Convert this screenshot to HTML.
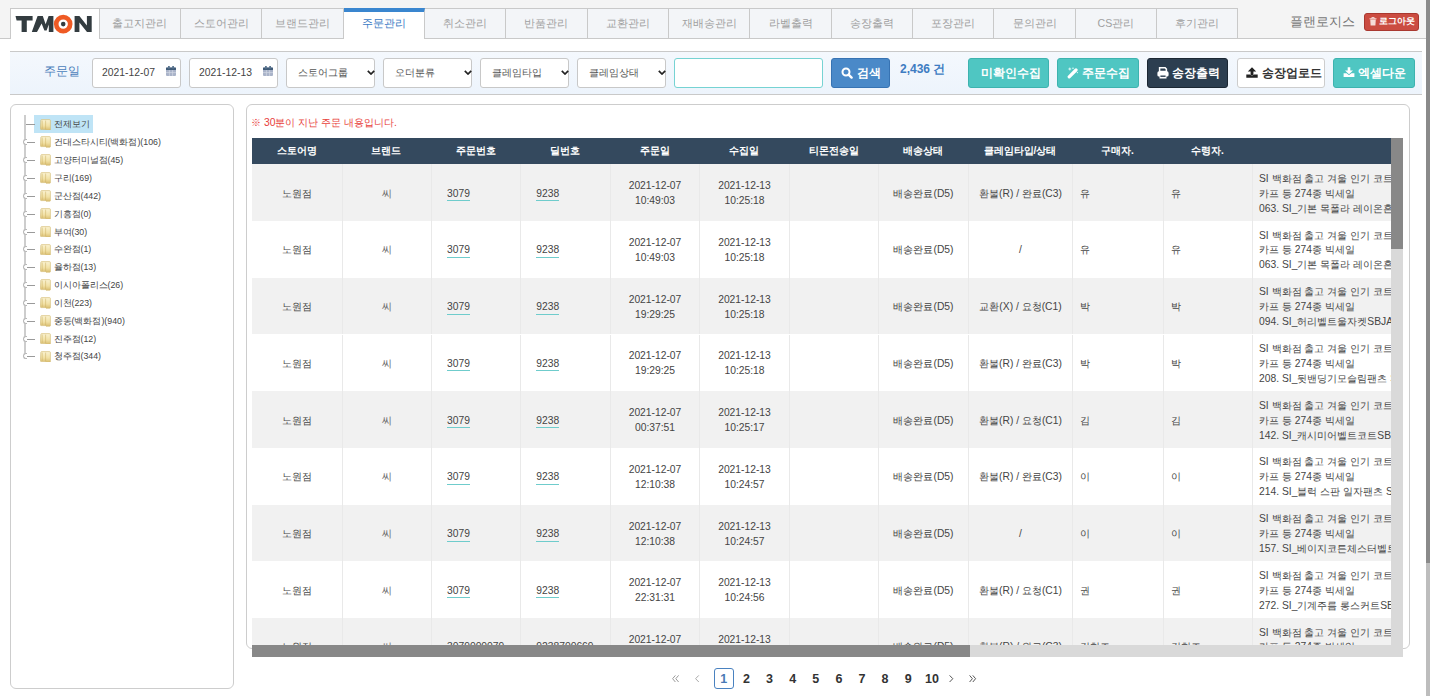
<!DOCTYPE html><html><head><meta charset="utf-8"><style>*{box-sizing:border-box;margin:0;padding:0}
html,body{width:1430px;height:696px;overflow:hidden;background:#fff;font-family:"Liberation Sans",sans-serif;color:#444;position:relative}
.ic{position:absolute}
#hdr{position:absolute;left:0;top:0;width:1426px;height:38px;background:#f4f4f4}
#hdrline{position:absolute;left:0;top:38px;width:1426px;height:1px;background:#c9c9c9}
#logo{position:absolute;left:10px;top:8px;width:89.5px;height:31px;background:#fff;border:1px solid #c9c9c9;border-bottom:none}
.tab{position:absolute;top:8px;height:31px;background:#f3f5f8;border:1px solid #c9c9c9;border-left:none;font-size:10.6px;color:#a0a0a0;text-align:center;line-height:28px}
.tab.act{background:#fff;color:#3a7ac4;border-top:4px solid #3a86cf;line-height:23px;border-bottom:none;height:31px}
#user{position:absolute;left:1289.5px;top:12.5px;font-size:13.3px;color:#777}
#logout{position:absolute;left:1364px;top:13px;width:55px;height:18px;background:#cb4c41;border:1px solid #a9382f;border-radius:3px;color:#fff;font-size:8.8px;font-weight:bold;line-height:14.5px;padding-left:14px;white-space:nowrap}
#sp{position:absolute;left:10px;top:51px;width:1412px;height:44px;background:linear-gradient(#f4f8fd,#edf4fc);border-top:1px solid #c9c9c9;border-bottom:1px solid #c9c9c9}
#lbl{position:absolute;left:44px;top:63px;font-size:12px;color:#4a7ebb}
.inp,.sel{position:absolute;top:58px;width:88.5px;height:30px;background:#fff;border:1px solid #c8c8c8;border-radius:3px;font-size:10.35px;color:#444;line-height:28px;padding-left:9px}
.sel{width:89px;padding-left:11px;color:#555;font-size:10.2px}
#txt{position:absolute;left:674px;top:58px;width:149px;height:30px;background:#fff;border:1px solid #76d3d3;border-radius:3px}
#sbtn{position:absolute;left:831px;top:58px;width:59px;height:30px;background:#4a89c8;border:1px solid #3773b3;border-radius:3px;color:#fff;font-size:12px;font-weight:bold;line-height:28px;padding-left:24.5px}
#cnt{position:absolute;left:900px;top:60.5px;font-size:12px;font-weight:bold;color:#3d7cc2}
.btn{position:absolute;top:58px;height:30px;border-radius:3px;font-size:12px;font-weight:bold;color:#fff;line-height:28px}
.bt{position:absolute;top:0;white-space:nowrap}
.teal{background:#4fc6c2;border:1px solid #3db3af}
.dark{background:#2c3e50;border:1px solid #1b2733}
.white{background:#fff;border:1px solid #cdcdcd;color:#333}
#lp{position:absolute;left:10px;top:104px;width:224px;height:584.5px;border:1px solid #cdcdcd;border-radius:6px}
#tline{position:absolute;left:24px;top:115px;width:1.5px;height:244px;background:#cdcdcd}
.hl{position:absolute;left:25.5px;width:9px;height:1px;background:#9a9a9a}
.knob{position:absolute;left:22.5px;width:4px;height:6px;border:1px solid #b8b8b8;border-right:none;border-radius:3px 0 0 3px;background:#fff}
.thl{position:absolute;left:34.4px;width:59px;height:17.4px;background:#bfe4f6}
.tt{position:absolute;left:53.5px;font-size:8.8px;line-height:12px;color:#444;white-space:nowrap}
#rp{position:absolute;left:246px;top:104px;width:1164px;height:545px;border:1px solid #cdcdcd;border-radius:6px}
#alert{position:absolute;left:251px;top:116px;font-size:10.4px;color:#e8403a;white-space:nowrap}
#tw{position:absolute;left:252px;top:137.6px;width:1151px;height:519.5px;overflow:hidden}
#thd{position:absolute;left:0;top:0;width:1151px;height:26.8px;background:#34495e}
.th{position:absolute;top:0;height:26.8px;line-height:26.5px;text-align:center;color:#fff;font-weight:bold;font-size:10.2px}
.tr{position:absolute;left:0;width:1248px;height:56.6px}
.odd{background:#f1f1f1}
.even{background:#fff}
.td{position:absolute;top:0;height:56.6px;border-left:1px solid #e9e9e9;font-size:10.3px;color:#444;display:flex;align-items:center;padding-top:3px}
.td:first-child{border-left:none}
.td .in{width:100%;line-height:14.9px;white-space:nowrap}
.c .in{text-align:center}
.l .in{padding-left:15px}
.l u{text-decoration:none;border-bottom:1px solid #6fcccc;padding-bottom:1.5px}
.l2 .in{padding-left:7px}
.l3 .in{padding-left:6px}
#vs{position:absolute;left:1139px;top:0;width:12px;height:519.5px;background:#d9d9d9}
#vth{position:absolute;left:0;top:0;width:12px;height:111px;background:#888}
#hs{position:absolute;left:0;top:507.5px;width:1139px;height:12px;background:#d9d9d9}
#hth{position:absolute;left:0;top:0;width:718px;height:12px;background:#888}
.pg{position:absolute;top:669px;width:24px;height:20px;text-align:center;font-size:12.5px;font-weight:bold;color:#333;line-height:20px}
.pg.act{color:#4a7ab5}
.pgact{position:absolute;left:713.7px;top:668.2px;width:20.4px;height:20.4px;border:1.6px solid #4a82c0;border-radius:3px}
#bsb{position:absolute;left:1425.5px;top:0;width:4.5px;height:696px;background:#bdbdbd}
#bsbt{position:absolute;left:0;top:0;width:4.5px;height:563px;background:#8a8a8a}
.lt .in{color:#666}
</style></head><body>
<div id="hdr"></div><div id="hdrline"></div>
<div id="logo"></div>
<svg class="ic" style="left:0px;top:0px" width="100" height="40" viewBox="0 0 100 40"><path d="M15.5 15.9 H32.6 V20.6 H26.8 V32 H21.6 V20.6 H16.6 Z" fill="#333c40"/><path d="M31.8 32 L37.6 15.9 H42.8 L45.6 24.2 L48.6 15.9 H53.4 V32 H48.8 V24.6 L46.6 30.4 H44.4 L41.6 23.6 L37 32 Z" fill="#333c40"/><circle cx="63.2" cy="24.1" r="7" fill="none" stroke="#ef5a24" stroke-width="4.6"/><circle cx="63.2" cy="24.1" r="2.3" fill="#333c40"/><path d="M74.6 15.9 H79.4 L86.9 25.6 V15.9 H91.7 V32 H87 L79.4 22.4 V32 H74.6 Z" fill="#333c40"/></svg>
<div class="tab" style="left:99.50px;width:81.36px">출고지관리</div>
<div class="tab" style="left:180.86px;width:81.36px">스토어관리</div>
<div class="tab" style="left:262.21px;width:81.36px">브랜드관리</div>
<div class="tab act" style="left:343.57px;width:81.36px">주문관리</div>
<div class="tab" style="left:424.93px;width:81.36px">취소관리</div>
<div class="tab" style="left:506.28px;width:81.36px">반품관리</div>
<div class="tab" style="left:587.64px;width:81.36px">교환관리</div>
<div class="tab" style="left:669.00px;width:81.36px">재배송관리</div>
<div class="tab" style="left:750.36px;width:81.36px">라벨출력</div>
<div class="tab" style="left:831.71px;width:81.36px">송장출력</div>
<div class="tab" style="left:913.07px;width:81.36px">포장관리</div>
<div class="tab" style="left:994.43px;width:81.36px">문의관리</div>
<div class="tab" style="left:1075.78px;width:81.36px">CS관리</div>
<div class="tab" style="left:1157.14px;width:81.36px">후기관리</div>
<div id="user">플랜로지스</div>
<div id="logout">로그아웃</div>
<svg class="ic" style="left:1368.5px;top:17px" width="8" height="9" viewBox="0 0 8 9"><path d="M0.5 1.8 H7.5 M2.8 1.8 V0.6 H5.2 V1.8" stroke="#f6dcd8" stroke-width="1" fill="none"/><path d="M1.2 2.6 H6.8 L6.4 8.6 H1.6 Z" fill="#f6dcd8"/></svg>
<div id="sp"></div>
<div id="lbl">주문일</div>
<div class="inp" style="left:92px">2021-12-07</div>
<svg class="ic" style="left:166.2px;top:65.5px" width="10" height="10" viewBox="0 0 10 10"><rect x="0" y="1.5" width="10" height="8.5" rx="1" fill="#a9b3c9"/><rect x="0" y="1.5" width="10" height="2.6" rx="0.6" fill="#3f5b78"/><rect x="2" y="0" width="1.8" height="2.6" fill="#5a7690"/><rect x="6.2" y="0" width="1.8" height="2.6" fill="#5a7690"/><path d="M0 6.6 H10 M3.4 4.1 V10 M6.6 4.1 V10" stroke="#d3d9e4" stroke-width="0.7"/></svg>
<div class="inp" style="left:189px">2021-12-13</div>
<svg class="ic" style="left:263.2px;top:65.5px" width="10" height="10" viewBox="0 0 10 10"><rect x="0" y="1.5" width="10" height="8.5" rx="1" fill="#a9b3c9"/><rect x="0" y="1.5" width="10" height="2.6" rx="0.6" fill="#3f5b78"/><rect x="2" y="0" width="1.8" height="2.6" fill="#5a7690"/><rect x="6.2" y="0" width="1.8" height="2.6" fill="#5a7690"/><path d="M0 6.6 H10 M3.4 4.1 V10 M6.6 4.1 V10" stroke="#d3d9e4" stroke-width="0.7"/></svg>
<div class="sel" style="left:286px">스토어그룹</div>
<svg class="ic" style="left:367px;top:70px" width="8" height="5" viewBox="0 0 8 5"><path d="M0.8 0.8 L4 4 L7.2 0.8" stroke="#222" stroke-width="1.7" fill="none"/></svg>
<div class="sel" style="left:383px">오더분류</div>
<svg class="ic" style="left:464px;top:70px" width="8" height="5" viewBox="0 0 8 5"><path d="M0.8 0.8 L4 4 L7.2 0.8" stroke="#222" stroke-width="1.7" fill="none"/></svg>
<div class="sel" style="left:480px">클레임타입</div>
<svg class="ic" style="left:561px;top:70px" width="8" height="5" viewBox="0 0 8 5"><path d="M0.8 0.8 L4 4 L7.2 0.8" stroke="#222" stroke-width="1.7" fill="none"/></svg>
<div class="sel" style="left:577px">클레임상태</div>
<svg class="ic" style="left:658px;top:70px" width="8" height="5" viewBox="0 0 8 5"><path d="M0.8 0.8 L4 4 L7.2 0.8" stroke="#222" stroke-width="1.7" fill="none"/></svg>
<div id="txt"></div>
<div id="sbtn">검색</div>
<svg class="ic" style="left:841px;top:67px" width="12" height="12" viewBox="0 0 12 12"><circle cx="5" cy="5" r="3.5" fill="none" stroke="#fff" stroke-width="2"/><path d="M7.6 7.6 L10.6 10.6" stroke="#fff" stroke-width="2.4" stroke-linecap="round"/></svg>
<div id="cnt">2,436 건</div>
<div class="btn teal" style="left:967.5px;width:81.5px"><span class="bt" style="left:12.5px">미확인수집</span></div>
<div class="btn teal" style="left:1057px;width:81.5px"><span class="bt" style="left:23.5px">주문수집</span></div>
<svg class="ic" style="left:1067px;top:66px" width="12" height="13" viewBox="0 0 12 13"><path d="M2.2 10.8 L9 4" stroke="#fff" stroke-width="3.2" stroke-linecap="round"/><path d="M2.8 1.6 V4.4 M1.4 3 H4.2" stroke="#dff8f7" stroke-width="1"/><circle cx="6" cy="2.2" r="0.8" fill="#dff8f7"/><circle cx="10.4" cy="6.6" r="0.7" fill="#dff8f7"/></svg>
<div class="btn dark" style="left:1146.5px;width:81.5px"><span class="bt" style="left:24px">송장출력</span></div>
<svg class="ic" style="left:1156.5px;top:66.5px" width="12" height="12" viewBox="0 0 12 12"><path d="M2.6 0.8 H8.1 L9.4 2.1 V4.6 H2.6 Z" fill="none" stroke="#fff" stroke-width="1.5"/><rect x="0.4" y="4.3" width="11.2" height="5.3" rx="1.6" fill="#fff"/><rect x="2.5" y="8" width="7" height="3.5" fill="#fff"/><rect x="3.4" y="8.5" width="5.2" height="1.4" fill="#2c3e50"/></svg>
<div class="btn white" style="left:1236.5px;width:88.5px"><span class="bt" style="left:24px;font-size:11.6px">송장업로드</span></div>
<svg class="ic" style="left:1246px;top:67px" width="12" height="11" viewBox="0 0 12 11"><path d="M6 0.2 L10.2 4.5 H7.4 V8.2 H4.6 V4.5 H1.8 Z" fill="#222"/><path d="M0.3 7.6 H4 Q6 9.4 8 7.6 H11.7 V10.8 H0.3 Z" fill="#222"/></svg>
<div class="btn teal" style="left:1333px;width:82px"><span class="bt" style="left:23.5px">엑셀다운</span></div>
<svg class="ic" style="left:1342.5px;top:67px" width="12" height="10.5" viewBox="0 0 12 10.5"><path d="M4.7 0.2 H7.3 V3.4 H10 L6 7.2 L2 3.4 H4.7 Z" fill="#fff"/><path d="M0.6 6.2 H3.6 L6 8.3 L8.4 6.2 H11.4 V10 H0.6 Z" fill="#fff"/></svg>
<div id="lp"></div><div id="tline"></div>
<svg width="0" height="0" style="position:absolute"><defs><linearGradient id="fg" x1="0" x2="1"><stop offset="0" stop-color="#d8b868"/><stop offset="0.5" stop-color="#fbf0c4"/><stop offset="1" stop-color="#e8cf88"/></linearGradient><linearGradient id="fg2" x1="0" x2="0" y1="0" y2="1"><stop offset="0" stop-color="#faf3d2"/><stop offset="0.6" stop-color="#f1e0a4"/><stop offset="1" stop-color="#d9bd70"/></linearGradient></defs></svg>
<div class="thl" style="top:115.30px"></div>
<div class="hl" style="top:124.40px"></div>
<svg class="ic" style="left:39.5px;top:118.6px" width="11" height="11.6" viewBox="0 0 11 11.6"><path d="M1.6 0.6 H9.4 Q10.4 0.6 10.4 1.6 V10.6 Q10.4 11.2 9.8 11.2 H6 L5.4 10.6 H1.2 Q0.4 10.6 0.4 9.8 L0.8 1.4 Q1 0.6 1.6 0.6 Z" fill="url(#fg2)" stroke="#d2b86e" stroke-width="0.6"/><path d="M2.2 1.6 V9.8 M5.6 1.6 V10.4" stroke="#c9ab5a" stroke-width="0.8" opacity="0.6"/></svg>
<div class="tt" style="top:118.40px">전제보기</div>
<div class="hl" style="top:142.25px"></div>
<div class="knob" style="top:139.25px"></div>
<svg class="ic" style="left:39.5px;top:136.45px" width="11" height="11.6" viewBox="0 0 11 11.6"><path d="M1.6 0.6 H9.4 Q10.4 0.6 10.4 1.6 V10.6 Q10.4 11.2 9.8 11.2 H6 L5.4 10.6 H1.2 Q0.4 10.6 0.4 9.8 L0.8 1.4 Q1 0.6 1.6 0.6 Z" fill="url(#fg2)" stroke="#d2b86e" stroke-width="0.6"/><path d="M2.2 1.6 V9.8 M5.6 1.6 V10.4" stroke="#c9ab5a" stroke-width="0.8" opacity="0.6"/></svg>
<div class="tt" style="top:136.25px">건대스타시티(백화점)(106)</div>
<div class="hl" style="top:160.10px"></div>
<div class="knob" style="top:157.10px"></div>
<svg class="ic" style="left:39.5px;top:154.3px" width="11" height="11.6" viewBox="0 0 11 11.6"><path d="M1.6 0.6 H9.4 Q10.4 0.6 10.4 1.6 V10.6 Q10.4 11.2 9.8 11.2 H6 L5.4 10.6 H1.2 Q0.4 10.6 0.4 9.8 L0.8 1.4 Q1 0.6 1.6 0.6 Z" fill="url(#fg2)" stroke="#d2b86e" stroke-width="0.6"/><path d="M2.2 1.6 V9.8 M5.6 1.6 V10.4" stroke="#c9ab5a" stroke-width="0.8" opacity="0.6"/></svg>
<div class="tt" style="top:154.10px">고양터미널점(45)</div>
<div class="hl" style="top:177.95px"></div>
<div class="knob" style="top:174.95px"></div>
<svg class="ic" style="left:39.5px;top:172.15px" width="11" height="11.6" viewBox="0 0 11 11.6"><path d="M1.6 0.6 H9.4 Q10.4 0.6 10.4 1.6 V10.6 Q10.4 11.2 9.8 11.2 H6 L5.4 10.6 H1.2 Q0.4 10.6 0.4 9.8 L0.8 1.4 Q1 0.6 1.6 0.6 Z" fill="url(#fg2)" stroke="#d2b86e" stroke-width="0.6"/><path d="M2.2 1.6 V9.8 M5.6 1.6 V10.4" stroke="#c9ab5a" stroke-width="0.8" opacity="0.6"/></svg>
<div class="tt" style="top:171.95px">구리(169)</div>
<div class="hl" style="top:195.80px"></div>
<div class="knob" style="top:192.80px"></div>
<svg class="ic" style="left:39.5px;top:190.0px" width="11" height="11.6" viewBox="0 0 11 11.6"><path d="M1.6 0.6 H9.4 Q10.4 0.6 10.4 1.6 V10.6 Q10.4 11.2 9.8 11.2 H6 L5.4 10.6 H1.2 Q0.4 10.6 0.4 9.8 L0.8 1.4 Q1 0.6 1.6 0.6 Z" fill="url(#fg2)" stroke="#d2b86e" stroke-width="0.6"/><path d="M2.2 1.6 V9.8 M5.6 1.6 V10.4" stroke="#c9ab5a" stroke-width="0.8" opacity="0.6"/></svg>
<div class="tt" style="top:189.80px">군산점(442)</div>
<div class="hl" style="top:213.65px"></div>
<div class="knob" style="top:210.65px"></div>
<svg class="ic" style="left:39.5px;top:207.85px" width="11" height="11.6" viewBox="0 0 11 11.6"><path d="M1.6 0.6 H9.4 Q10.4 0.6 10.4 1.6 V10.6 Q10.4 11.2 9.8 11.2 H6 L5.4 10.6 H1.2 Q0.4 10.6 0.4 9.8 L0.8 1.4 Q1 0.6 1.6 0.6 Z" fill="url(#fg2)" stroke="#d2b86e" stroke-width="0.6"/><path d="M2.2 1.6 V9.8 M5.6 1.6 V10.4" stroke="#c9ab5a" stroke-width="0.8" opacity="0.6"/></svg>
<div class="tt" style="top:207.65px">기흥점(0)</div>
<div class="hl" style="top:231.50px"></div>
<div class="knob" style="top:228.50px"></div>
<svg class="ic" style="left:39.5px;top:225.7px" width="11" height="11.6" viewBox="0 0 11 11.6"><path d="M1.6 0.6 H9.4 Q10.4 0.6 10.4 1.6 V10.6 Q10.4 11.2 9.8 11.2 H6 L5.4 10.6 H1.2 Q0.4 10.6 0.4 9.8 L0.8 1.4 Q1 0.6 1.6 0.6 Z" fill="url(#fg2)" stroke="#d2b86e" stroke-width="0.6"/><path d="M2.2 1.6 V9.8 M5.6 1.6 V10.4" stroke="#c9ab5a" stroke-width="0.8" opacity="0.6"/></svg>
<div class="tt" style="top:225.50px">부여(30)</div>
<div class="hl" style="top:249.35px"></div>
<div class="knob" style="top:246.35px"></div>
<svg class="ic" style="left:39.5px;top:243.55px" width="11" height="11.6" viewBox="0 0 11 11.6"><path d="M1.6 0.6 H9.4 Q10.4 0.6 10.4 1.6 V10.6 Q10.4 11.2 9.8 11.2 H6 L5.4 10.6 H1.2 Q0.4 10.6 0.4 9.8 L0.8 1.4 Q1 0.6 1.6 0.6 Z" fill="url(#fg2)" stroke="#d2b86e" stroke-width="0.6"/><path d="M2.2 1.6 V9.8 M5.6 1.6 V10.4" stroke="#c9ab5a" stroke-width="0.8" opacity="0.6"/></svg>
<div class="tt" style="top:243.35px">수완점(1)</div>
<div class="hl" style="top:267.20px"></div>
<div class="knob" style="top:264.20px"></div>
<svg class="ic" style="left:39.5px;top:261.4px" width="11" height="11.6" viewBox="0 0 11 11.6"><path d="M1.6 0.6 H9.4 Q10.4 0.6 10.4 1.6 V10.6 Q10.4 11.2 9.8 11.2 H6 L5.4 10.6 H1.2 Q0.4 10.6 0.4 9.8 L0.8 1.4 Q1 0.6 1.6 0.6 Z" fill="url(#fg2)" stroke="#d2b86e" stroke-width="0.6"/><path d="M2.2 1.6 V9.8 M5.6 1.6 V10.4" stroke="#c9ab5a" stroke-width="0.8" opacity="0.6"/></svg>
<div class="tt" style="top:261.20px">율하점(13)</div>
<div class="hl" style="top:285.05px"></div>
<div class="knob" style="top:282.05px"></div>
<svg class="ic" style="left:39.5px;top:279.25px" width="11" height="11.6" viewBox="0 0 11 11.6"><path d="M1.6 0.6 H9.4 Q10.4 0.6 10.4 1.6 V10.6 Q10.4 11.2 9.8 11.2 H6 L5.4 10.6 H1.2 Q0.4 10.6 0.4 9.8 L0.8 1.4 Q1 0.6 1.6 0.6 Z" fill="url(#fg2)" stroke="#d2b86e" stroke-width="0.6"/><path d="M2.2 1.6 V9.8 M5.6 1.6 V10.4" stroke="#c9ab5a" stroke-width="0.8" opacity="0.6"/></svg>
<div class="tt" style="top:279.05px">이시아폴리스(26)</div>
<div class="hl" style="top:302.90px"></div>
<div class="knob" style="top:299.90px"></div>
<svg class="ic" style="left:39.5px;top:297.1px" width="11" height="11.6" viewBox="0 0 11 11.6"><path d="M1.6 0.6 H9.4 Q10.4 0.6 10.4 1.6 V10.6 Q10.4 11.2 9.8 11.2 H6 L5.4 10.6 H1.2 Q0.4 10.6 0.4 9.8 L0.8 1.4 Q1 0.6 1.6 0.6 Z" fill="url(#fg2)" stroke="#d2b86e" stroke-width="0.6"/><path d="M2.2 1.6 V9.8 M5.6 1.6 V10.4" stroke="#c9ab5a" stroke-width="0.8" opacity="0.6"/></svg>
<div class="tt" style="top:296.90px">이천(223)</div>
<div class="hl" style="top:320.75px"></div>
<div class="knob" style="top:317.75px"></div>
<svg class="ic" style="left:39.5px;top:314.95px" width="11" height="11.6" viewBox="0 0 11 11.6"><path d="M1.6 0.6 H9.4 Q10.4 0.6 10.4 1.6 V10.6 Q10.4 11.2 9.8 11.2 H6 L5.4 10.6 H1.2 Q0.4 10.6 0.4 9.8 L0.8 1.4 Q1 0.6 1.6 0.6 Z" fill="url(#fg2)" stroke="#d2b86e" stroke-width="0.6"/><path d="M2.2 1.6 V9.8 M5.6 1.6 V10.4" stroke="#c9ab5a" stroke-width="0.8" opacity="0.6"/></svg>
<div class="tt" style="top:314.75px">중동(백화점)(940)</div>
<div class="hl" style="top:338.60px"></div>
<div class="knob" style="top:335.60px"></div>
<svg class="ic" style="left:39.5px;top:332.8px" width="11" height="11.6" viewBox="0 0 11 11.6"><path d="M1.6 0.6 H9.4 Q10.4 0.6 10.4 1.6 V10.6 Q10.4 11.2 9.8 11.2 H6 L5.4 10.6 H1.2 Q0.4 10.6 0.4 9.8 L0.8 1.4 Q1 0.6 1.6 0.6 Z" fill="url(#fg2)" stroke="#d2b86e" stroke-width="0.6"/><path d="M2.2 1.6 V9.8 M5.6 1.6 V10.4" stroke="#c9ab5a" stroke-width="0.8" opacity="0.6"/></svg>
<div class="tt" style="top:332.60px">진주점(12)</div>
<div class="hl" style="top:356.45px"></div>
<div class="knob" style="top:353.45px"></div>
<svg class="ic" style="left:39.5px;top:350.65px" width="11" height="11.6" viewBox="0 0 11 11.6"><path d="M1.6 0.6 H9.4 Q10.4 0.6 10.4 1.6 V10.6 Q10.4 11.2 9.8 11.2 H6 L5.4 10.6 H1.2 Q0.4 10.6 0.4 9.8 L0.8 1.4 Q1 0.6 1.6 0.6 Z" fill="url(#fg2)" stroke="#d2b86e" stroke-width="0.6"/><path d="M2.2 1.6 V9.8 M5.6 1.6 V10.4" stroke="#c9ab5a" stroke-width="0.8" opacity="0.6"/></svg>
<div class="tt" style="top:350.45px">청주점(344)</div>
<div id="rp"></div>
<div id="alert">※ 30분이 지난 주문 내용입니다.</div>
<div id="tw"><div id="thd">
<div class="th" style="left:0.0px;width:89.5px">스토어명</div>
<div class="th" style="left:89.5px;width:89.5px">브랜드</div>
<div class="th" style="left:179.0px;width:89.3px">주문번호</div>
<div class="th" style="left:268.3px;width:89.7px">딜번호</div>
<div class="th" style="left:358.0px;width:89.0px">주문일</div>
<div class="th" style="left:447.0px;width:90.0px">수집일</div>
<div class="th" style="left:537.0px;width:89.0px">티몬전송일</div>
<div class="th" style="left:626.0px;width:90.0px">배송상태</div>
<div class="th" style="left:716.0px;width:104.0px">클레임타입/상태</div>
<div class="th" style="left:820.0px;width:91.0px">구매자.</div>
<div class="th" style="left:911.0px;width:89.0px">수령자.</div>
<div class="th" style="left:1000.0px;width:248.0px"></div>
</div>
<div class="tr odd" style="top:26.80px">
<div class="td c" style="left:0.0px;width:89.5px"><div class="in">노원점</div></div>
<div class="td c lt" style="left:89.5px;width:89.5px"><div class="in">씨</div></div>
<div class="td l" style="left:179.0px;width:89.3px"><div class="in"><u>3079</u></div></div>
<div class="td l" style="left:268.3px;width:89.7px"><div class="in"><u>9238</u></div></div>
<div class="td c" style="left:358.0px;width:89.0px"><div class="in">2021-12-07<br>10:49:03</div></div>
<div class="td c" style="left:447.0px;width:90.0px"><div class="in">2021-12-13<br>10:25:18</div></div>
<div class="td c" style="left:537.0px;width:89.0px"><div class="in"></div></div>
<div class="td c" style="left:626.0px;width:90.0px"><div class="in">배송완료(D5)</div></div>
<div class="td c" style="left:716.0px;width:104.0px"><div class="in">환불(R) / 완료(C3)</div></div>
<div class="td l2" style="left:820.0px;width:91.0px"><div class="in">유</div></div>
<div class="td l2" style="left:911.0px;width:89.0px"><div class="in">유</div></div>
<div class="td l3" style="left:1000.0px;width:248.0px"><div class="in">SI 백화점 출고 겨울 인기 코트<br>카프 등 274종 빅세일<br>063. SI_기본 목폴라 레이온혼방</div></div>
</div>
<div class="tr even" style="top:83.52px">
<div class="td c" style="left:0.0px;width:89.5px"><div class="in">노원점</div></div>
<div class="td c lt" style="left:89.5px;width:89.5px"><div class="in">씨</div></div>
<div class="td l" style="left:179.0px;width:89.3px"><div class="in"><u>3079</u></div></div>
<div class="td l" style="left:268.3px;width:89.7px"><div class="in"><u>9238</u></div></div>
<div class="td c" style="left:358.0px;width:89.0px"><div class="in">2021-12-07<br>10:49:03</div></div>
<div class="td c" style="left:447.0px;width:90.0px"><div class="in">2021-12-13<br>10:25:18</div></div>
<div class="td c" style="left:537.0px;width:89.0px"><div class="in"></div></div>
<div class="td c" style="left:626.0px;width:90.0px"><div class="in">배송완료(D5)</div></div>
<div class="td c" style="left:716.0px;width:104.0px"><div class="in">/</div></div>
<div class="td l2" style="left:820.0px;width:91.0px"><div class="in">유</div></div>
<div class="td l2" style="left:911.0px;width:89.0px"><div class="in">유</div></div>
<div class="td l3" style="left:1000.0px;width:248.0px"><div class="in">SI 백화점 출고 겨울 인기 코트<br>카프 등 274종 빅세일<br>063. SI_기본 목폴라 레이온혼방</div></div>
</div>
<div class="tr odd" style="top:140.24px">
<div class="td c" style="left:0.0px;width:89.5px"><div class="in">노원점</div></div>
<div class="td c lt" style="left:89.5px;width:89.5px"><div class="in">씨</div></div>
<div class="td l" style="left:179.0px;width:89.3px"><div class="in"><u>3079</u></div></div>
<div class="td l" style="left:268.3px;width:89.7px"><div class="in"><u>9238</u></div></div>
<div class="td c" style="left:358.0px;width:89.0px"><div class="in">2021-12-07<br>19:29:25</div></div>
<div class="td c" style="left:447.0px;width:90.0px"><div class="in">2021-12-13<br>10:25:18</div></div>
<div class="td c" style="left:537.0px;width:89.0px"><div class="in"></div></div>
<div class="td c" style="left:626.0px;width:90.0px"><div class="in">배송완료(D5)</div></div>
<div class="td c" style="left:716.0px;width:104.0px"><div class="in">교환(X) / 요청(C1)</div></div>
<div class="td l2" style="left:820.0px;width:91.0px"><div class="in">박</div></div>
<div class="td l2" style="left:911.0px;width:89.0px"><div class="in">박</div></div>
<div class="td l3" style="left:1000.0px;width:248.0px"><div class="in">SI 백화점 출고 겨울 인기 코트<br>카프 등 274종 빅세일<br>094. SI_허리벨트울자켓SBJA</div></div>
</div>
<div class="tr even" style="top:196.96px">
<div class="td c" style="left:0.0px;width:89.5px"><div class="in">노원점</div></div>
<div class="td c lt" style="left:89.5px;width:89.5px"><div class="in">씨</div></div>
<div class="td l" style="left:179.0px;width:89.3px"><div class="in"><u>3079</u></div></div>
<div class="td l" style="left:268.3px;width:89.7px"><div class="in"><u>9238</u></div></div>
<div class="td c" style="left:358.0px;width:89.0px"><div class="in">2021-12-07<br>19:29:25</div></div>
<div class="td c" style="left:447.0px;width:90.0px"><div class="in">2021-12-13<br>10:25:18</div></div>
<div class="td c" style="left:537.0px;width:89.0px"><div class="in"></div></div>
<div class="td c" style="left:626.0px;width:90.0px"><div class="in">배송완료(D5)</div></div>
<div class="td c" style="left:716.0px;width:104.0px"><div class="in">환불(R) / 완료(C3)</div></div>
<div class="td l2" style="left:820.0px;width:91.0px"><div class="in">박</div></div>
<div class="td l2" style="left:911.0px;width:89.0px"><div class="in">박</div></div>
<div class="td l3" style="left:1000.0px;width:248.0px"><div class="in">SI 백화점 출고 겨울 인기 코트<br>카프 등 274종 빅세일<br>208. SI_뒷밴딩기모슬림팬츠 S</div></div>
</div>
<div class="tr odd" style="top:253.68px">
<div class="td c" style="left:0.0px;width:89.5px"><div class="in">노원점</div></div>
<div class="td c lt" style="left:89.5px;width:89.5px"><div class="in">씨</div></div>
<div class="td l" style="left:179.0px;width:89.3px"><div class="in"><u>3079</u></div></div>
<div class="td l" style="left:268.3px;width:89.7px"><div class="in"><u>9238</u></div></div>
<div class="td c" style="left:358.0px;width:89.0px"><div class="in">2021-12-07<br>00:37:51</div></div>
<div class="td c" style="left:447.0px;width:90.0px"><div class="in">2021-12-13<br>10:25:17</div></div>
<div class="td c" style="left:537.0px;width:89.0px"><div class="in"></div></div>
<div class="td c" style="left:626.0px;width:90.0px"><div class="in">배송완료(D5)</div></div>
<div class="td c" style="left:716.0px;width:104.0px"><div class="in">환불(R) / 요청(C1)</div></div>
<div class="td l2" style="left:820.0px;width:91.0px"><div class="in">김</div></div>
<div class="td l2" style="left:911.0px;width:89.0px"><div class="in">김</div></div>
<div class="td l3" style="left:1000.0px;width:248.0px"><div class="in">SI 백화점 출고 겨울 인기 코트<br>카프 등 274종 빅세일<br>142. SI_캐시미어벨트코트SBC</div></div>
</div>
<div class="tr even" style="top:310.40px">
<div class="td c" style="left:0.0px;width:89.5px"><div class="in">노원점</div></div>
<div class="td c lt" style="left:89.5px;width:89.5px"><div class="in">씨</div></div>
<div class="td l" style="left:179.0px;width:89.3px"><div class="in"><u>3079</u></div></div>
<div class="td l" style="left:268.3px;width:89.7px"><div class="in"><u>9238</u></div></div>
<div class="td c" style="left:358.0px;width:89.0px"><div class="in">2021-12-07<br>12:10:38</div></div>
<div class="td c" style="left:447.0px;width:90.0px"><div class="in">2021-12-13<br>10:24:57</div></div>
<div class="td c" style="left:537.0px;width:89.0px"><div class="in"></div></div>
<div class="td c" style="left:626.0px;width:90.0px"><div class="in">배송완료(D5)</div></div>
<div class="td c" style="left:716.0px;width:104.0px"><div class="in">환불(R) / 완료(C3)</div></div>
<div class="td l2" style="left:820.0px;width:91.0px"><div class="in">이</div></div>
<div class="td l2" style="left:911.0px;width:89.0px"><div class="in">이</div></div>
<div class="td l3" style="left:1000.0px;width:248.0px"><div class="in">SI 백화점 출고 겨울 인기 코트<br>카프 등 274종 빅세일<br>214. SI_블럭 스판 일자팬츠 S</div></div>
</div>
<div class="tr odd" style="top:367.12px">
<div class="td c" style="left:0.0px;width:89.5px"><div class="in">노원점</div></div>
<div class="td c lt" style="left:89.5px;width:89.5px"><div class="in">씨</div></div>
<div class="td l" style="left:179.0px;width:89.3px"><div class="in"><u>3079</u></div></div>
<div class="td l" style="left:268.3px;width:89.7px"><div class="in"><u>9238</u></div></div>
<div class="td c" style="left:358.0px;width:89.0px"><div class="in">2021-12-07<br>12:10:38</div></div>
<div class="td c" style="left:447.0px;width:90.0px"><div class="in">2021-12-13<br>10:24:57</div></div>
<div class="td c" style="left:537.0px;width:89.0px"><div class="in"></div></div>
<div class="td c" style="left:626.0px;width:90.0px"><div class="in">배송완료(D5)</div></div>
<div class="td c" style="left:716.0px;width:104.0px"><div class="in">/</div></div>
<div class="td l2" style="left:820.0px;width:91.0px"><div class="in">이</div></div>
<div class="td l2" style="left:911.0px;width:89.0px"><div class="in">이</div></div>
<div class="td l3" style="left:1000.0px;width:248.0px"><div class="in">SI 백화점 출고 겨울 인기 코트<br>카프 등 274종 빅세일<br>157. SI_베이지코튼체스터벨트</div></div>
</div>
<div class="tr even" style="top:423.84px">
<div class="td c" style="left:0.0px;width:89.5px"><div class="in">노원점</div></div>
<div class="td c lt" style="left:89.5px;width:89.5px"><div class="in">씨</div></div>
<div class="td l" style="left:179.0px;width:89.3px"><div class="in"><u>3079</u></div></div>
<div class="td l" style="left:268.3px;width:89.7px"><div class="in"><u>9238</u></div></div>
<div class="td c" style="left:358.0px;width:89.0px"><div class="in">2021-12-07<br>22:31:31</div></div>
<div class="td c" style="left:447.0px;width:90.0px"><div class="in">2021-12-13<br>10:24:56</div></div>
<div class="td c" style="left:537.0px;width:89.0px"><div class="in"></div></div>
<div class="td c" style="left:626.0px;width:90.0px"><div class="in">배송완료(D5)</div></div>
<div class="td c" style="left:716.0px;width:104.0px"><div class="in">환불(R) / 요청(C1)</div></div>
<div class="td l2" style="left:820.0px;width:91.0px"><div class="in">권</div></div>
<div class="td l2" style="left:911.0px;width:89.0px"><div class="in">권</div></div>
<div class="td l3" style="left:1000.0px;width:248.0px"><div class="in">SI 백화점 출고 겨울 인기 코트<br>카프 등 274종 빅세일<br>272. SI_기계주름 롱스커트SBS</div></div>
</div>
<div class="tr odd" style="top:480.56px">
<div class="td c" style="left:0.0px;width:89.5px"><div class="in">노원점</div></div>
<div class="td c lt" style="left:89.5px;width:89.5px"><div class="in">씨</div></div>
<div class="td l" style="left:179.0px;width:89.3px"><div class="in"><u>3079000079</u></div></div>
<div class="td l" style="left:268.3px;width:89.7px"><div class="in"><u>9238700669</u></div></div>
<div class="td c" style="left:358.0px;width:89.0px"><div class="in">2021-12-07<br>08:10:51</div></div>
<div class="td c" style="left:447.0px;width:90.0px"><div class="in">2021-12-13<br>10:24:56</div></div>
<div class="td c" style="left:537.0px;width:89.0px"><div class="in"></div></div>
<div class="td c" style="left:626.0px;width:90.0px"><div class="in">배송완료(D5)</div></div>
<div class="td c" style="left:716.0px;width:104.0px"><div class="in">환불(R) / 완료(C3)</div></div>
<div class="td l2" style="left:820.0px;width:91.0px"><div class="in">김현조</div></div>
<div class="td l2" style="left:911.0px;width:89.0px"><div class="in">김현조</div></div>
<div class="td l3" style="left:1000.0px;width:248.0px"><div class="in">SI 백화점 출고 겨울 인기 코트<br>카프 등 274종 빅세일<br>SI 백화점 출고 겨울 인기 코트</div></div>
</div>
<div id="vs"><div id="vth"></div></div><div id="hs"><div id="hth"></div></div>
</div>
<div class="pg act" style="left:711.8px">1</div>
<div class="pg " style="left:734.5px">2</div>
<div class="pg " style="left:757.6px">3</div>
<div class="pg " style="left:780.7px">4</div>
<div class="pg " style="left:803.8px">5</div>
<div class="pg " style="left:826.9px">6</div>
<div class="pg " style="left:850.0px">7</div>
<div class="pg " style="left:873.1px">8</div>
<div class="pg " style="left:896.2px">9</div>
<div class="pg " style="left:919.9px">10</div>
<div class="pgact"></div>
<svg class="ic" style="left:671.5px;top:674.5px" width="8" height="8" viewBox="0 0 8 8"><path d="M3.4 0.4 L0.6 3.7 L3.4 7 M6.6 0.4 L3.8 3.7 L6.6 7" stroke="#9a9a9a" stroke-width="1" fill="none"/></svg>
<svg class="ic" style="left:694.8px;top:674.5px" width="5" height="8" viewBox="0 0 5 8"><path d="M3.8 0.4 L0.6 3.7 L3.8 7" stroke="#a8a8a8" stroke-width="1" fill="none"/></svg>
<svg class="ic" style="left:948.8px;top:674.5px" width="5" height="8" viewBox="0 0 5 8"><path d="M0.6 0.4 L3.8 3.7 L0.6 7" stroke="#555" stroke-width="1" fill="none"/></svg>
<svg class="ic" style="left:969.2px;top:674.5px" width="8" height="8" viewBox="0 0 8 8"><path d="M0.6 0.4 L3.4 3.7 L0.6 7 M3.8 0.4 L6.6 3.7 L3.8 7" stroke="#555" stroke-width="1" fill="none"/></svg>
<div id="bsb"><div id="bsbt"></div></div>
</body></html>
